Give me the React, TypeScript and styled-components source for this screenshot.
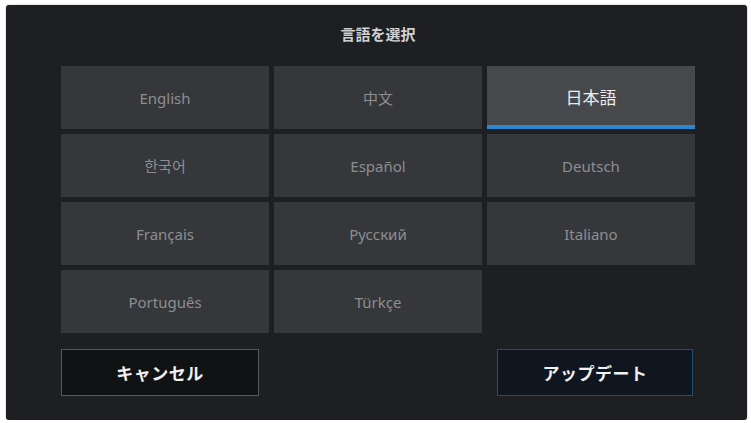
import React from "react";
import styled, { createGlobalStyle } from "styled-components";

const GlobalStyle = createGlobalStyle`
  html, body {
    margin: 0;
    padding: 0;
    background: #ffffff;
  }
  body {
    font-family: "Noto Sans", "Noto Sans CJK JP", sans-serif;
  }
`;

const Panel = styled.div`
  width: 741px;
  height: 415px;
  margin: 5px 0 0 6px;
  box-sizing: border-box;
  padding: 0 52px 0 55px;
  background: #1d1f22;
  border-radius: 3px;
  box-shadow: 0 0 2px rgba(0, 0, 0, 0.35);
  display: flex;
  flex-direction: column;
`;

const Title = styled.div`
  height: 56px;
  margin-bottom: 5px;
  display: flex;
  align-items: center;
  justify-content: center;
  color: #cfd0d2;
  font-family: "Noto Sans CJK JP", sans-serif;
  font-size: 15px;
  font-weight: 700;
`;

const Grid = styled.div`
  display: grid;
  grid-template-columns: repeat(3, 208px);
  grid-auto-rows: 63px;
  gap: 5px;
`;

const Tile = styled.div<{ $active?: boolean }>`
  display: flex;
  align-items: center;
  justify-content: center;
  background: ${(p) => (p.$active ? "#47484c" : "#35373b")};
  color: ${(p) => (p.$active ? "#ececec" : "#8d8e91")};
  font-family: "Noto Sans", "Noto Sans CJK JP", "Noto Sans CJK KR", sans-serif;
  font-size: ${(p) => (p.$active ? "17px" : "15px")};
  padding-bottom: ${(p) => (p.$active ? "2px" : "0")};
  box-sizing: border-box;
  box-shadow: ${(p) => (p.$active ? "inset 0 -4px 0 #2f86d0" : "none")};
`;

const Footer = styled.div`
  margin-top: 16px;
  padding-right: 2px;
  display: flex;
  justify-content: space-between;
`;

const Button = styled.div<{ $primary?: boolean }>`
  width: ${(p) => (p.$primary ? "196px" : "198px")};
  height: 47px;
  box-sizing: border-box;
  display: flex;
  align-items: center;
  justify-content: center;
  background: ${(p) => (p.$primary ? "#0f1620" : "#111214")};
  border: 1px solid ${(p) => (p.$primary ? "#234d73" : "#55575a")};
  color: #f0f0f0;
  font-family: "Noto Sans CJK JP", sans-serif;
  font-size: 17px;
  font-weight: 700;
  letter-spacing: 0.5px;
`;

const languages = [
  "English",
  "中文",
  "日本語",
  "한국어",
  "Español",
  "Deutsch",
  "Français",
  "Русский",
  "Italiano",
  "Português",
  "Türkçe",
];

const App: React.FC = () => {
  return (
    <>
      <GlobalStyle />
      <Panel>
        <Title>言語を選択</Title>
        <Grid>
          {languages.map((lang) => (
            <Tile key={lang} $active={lang === "日本語"}>
              {lang}
            </Tile>
          ))}
        </Grid>
        <Footer>
          <Button>キャンセル</Button>
          <Button $primary>アップデート</Button>
        </Footer>
      </Panel>
    </>
  );
};

export default App;
